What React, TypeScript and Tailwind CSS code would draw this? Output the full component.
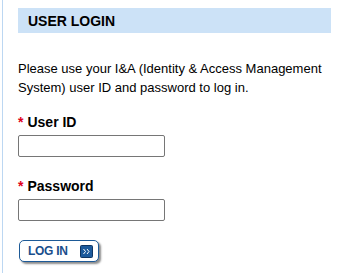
import React from 'react';

export default function App() {
  return (
    <div className="w-[343px] h-[273px] bg-white pl-[2px]" style={{ fontFamily: '"Liberation Sans", Arial, sans-serif' }}>
      <div className="h-full border-l border-[#bcd7f2] pl-[15px] pr-[12px] pt-[8px]">
        {/* header */}
        <div className="h-[25px] bg-[#cce2f7] pl-[10px] flex items-center">
          <h2 className="text-[14px] font-bold text-black leading-none">USER LOGIN</h2>
        </div>

        <p className="mt-[26px] text-[13px] leading-[19px] text-black whitespace-nowrap">
          Please use your I&amp;A (Identity &amp; Access Management
          <br />
          System) user ID and password to log in.
        </p>

        {/* user id */}
        <div className="mt-[16px] flex flex-col">
          <label htmlFor="uid" className="text-[14px] font-bold text-black leading-[18px]">
            <span className="text-[#e0001b] mr-[4px]">*</span>User ID
          </label>
          <input id="uid" type="text" className="mt-[4px] w-[147px] h-[22px] border border-[#767676] rounded-[2px] outline-none" />
        </div>

        {/* password */}
        <div className="mt-[20px] flex flex-col">
          <label htmlFor="pwd" className="text-[14px] font-bold text-black leading-[18px]">
            <span className="text-[#e0001b] mr-[4px]">*</span>Password
          </label>
          <input id="pwd" type="password" className="mt-[4px] w-[147px] h-[22px] border border-[#767676] rounded-[2px] outline-none" />
        </div>

        <button className="mt-[19px] ml-[1px] w-[80px] h-[22px] flex items-center justify-between pl-[8px] pr-[5px] bg-white border border-[#1d5a97] rounded-[5px] shadow-[2px_2px_2px_rgba(0,0,0,0.45)]">
          <span className="text-[12px] font-bold text-[#1a4e8c] leading-none tracking-[-0.3px]">LOG IN</span>
          <svg width="13" height="13" viewBox="0 0 13 13">
            <rect x="0.5" y="0.5" width="12" height="12" rx="1" fill="#1c5a9c" stroke="#0e3563" />
            <path d="M3.5 4 L5.5 6.5 L3.5 9 M7 4 L9 6.5 L7 9" fill="none" stroke="#fff" strokeWidth="1" />
          </svg>
        </button>
      </div>
    </div>
  );
}
